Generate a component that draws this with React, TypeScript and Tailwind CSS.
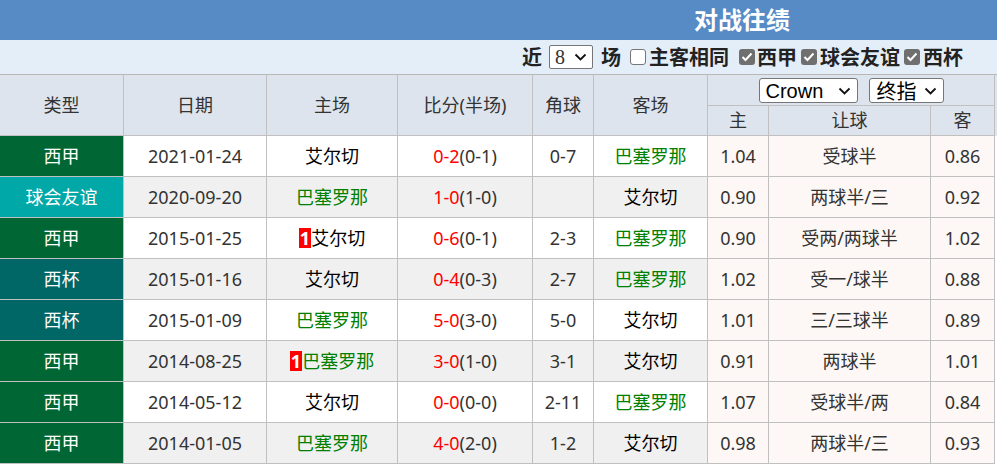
import React from 'react';

type Match = {
  type: string;
  date: string;
  home: string;
  homeBadge?: boolean;
  score: string;
  half: string;
  corner: string;
  away: string;
  h: string;
  line: string;
  a: string;
};

const matches: Match[] = [
  { type: '西甲', date: '2021-01-24', home: '艾尔切', score: '0-2', half: '(0-1)', corner: '0-7', away: '巴塞罗那', h: '1.04', line: '受球半', a: '0.86' },
  { type: '球会友谊', date: '2020-09-20', home: '巴塞罗那', score: '1-0', half: '(1-0)', corner: '', away: '艾尔切', h: '0.90', line: '两球半/三', a: '0.92' },
  { type: '西甲', date: '2015-01-25', home: '艾尔切', homeBadge: true, score: '0-6', half: '(0-1)', corner: '2-3', away: '巴塞罗那', h: '0.90', line: '受两/两球半', a: '1.02' },
  { type: '西杯', date: '2015-01-16', home: '艾尔切', score: '0-4', half: '(0-3)', corner: '2-7', away: '巴塞罗那', h: '1.02', line: '受一/球半', a: '0.88' },
  { type: '西杯', date: '2015-01-09', home: '巴塞罗那', score: '5-0', half: '(3-0)', corner: '5-0', away: '艾尔切', h: '1.01', line: '三/三球半', a: '0.89' },
  { type: '西甲', date: '2014-08-25', home: '巴塞罗那', homeBadge: true, score: '3-0', half: '(1-0)', corner: '3-1', away: '艾尔切', h: '0.91', line: '两球半', a: '1.01' },
  { type: '西甲', date: '2014-05-12', home: '艾尔切', score: '0-0', half: '(0-0)', corner: '2-11', away: '巴塞罗那', h: '1.07', line: '受球半/两', a: '0.84' },
  { type: '西甲', date: '2014-01-05', home: '巴塞罗那', score: '4-0', half: '(2-0)', corner: '1-2', away: '艾尔切', h: '0.98', line: '两球半/三', a: '0.93' },
];

const typeBg: Record<string, string> = {
  西甲: 'bg-[#006633]',
  西杯: 'bg-[#006666]',
  球会友谊: 'bg-[#00a8a8]',
};

const teamColor = (name: string) => (name === '巴塞罗那' ? 'text-[#008000]' : 'text-black');

const Chevron = () => (
  <svg width="13" height="8" viewBox="0 0 13 8" fill="none">
    <path d="M1.5 1.5 L6.5 6.5 L11.5 1.5" stroke="#111" strokeWidth="1.8" />
  </svg>
);

const CheckBox = ({ checked }: { checked: boolean }) =>
  checked ? (
    <span className="inline-flex h-[16px] w-[16px] items-center justify-center rounded-[3px] bg-[#6f6f6f]">
      <svg width="12" height="10" viewBox="0 0 12 10" fill="none">
        <path d="M1.5 5 L4.5 8 L10.5 1.5" stroke="#fff" strokeWidth="2" />
      </svg>
    </span>
  ) : (
    <span className="inline-block h-[16px] w-[16px] rounded-[3px] border border-[#767676] bg-white" />
  );

const cell = 'flex items-center justify-center border-r border-b border-[#c0c0c0]';
const cols = 'grid grid-cols-[124px_143px_131px_135px_61px_114px_61px_162px_64px]';

export default function App() {
  return (
    <div className="w-[997px] h-[466px] overflow-hidden bg-white font-['Noto_Sans','Noto_Sans_CJK_SC',sans-serif] text-[18px] text-[#333]">
      <div className="h-[40px] bg-[#568bc6] pl-[694px] flex items-center">
        <span className="text-[24px] font-bold text-white leading-none">对战往绩</span>
      </div>

      <div className="h-[35px] bg-[#e4eef9] border-b border-[#b8b8b8] flex items-center justify-end pr-[34px] text-[20px] font-bold text-[#222] font-['Noto_Sans_CJK_SC',sans-serif]">
        <span>近</span>
        <span className="ml-[7px] mr-[8px] flex h-[24px] w-[44px] items-center justify-between rounded-[2px] border border-[#767676] bg-white pl-[5px] pr-[5px] font-normal">
          <span className="font-['Liberation_Serif',serif] text-[20px] leading-none text-[#333]">8</span>
          <Chevron />
        </span>
        <span>场</span>
        <span className="ml-[9px] mr-[3px] flex"><CheckBox checked={false} /></span>
        <span>主客相同</span>
        <span className="ml-[10px] mr-[2px] flex"><CheckBox checked /></span>
        <span>西甲</span>
        <span className="ml-[4px] mr-[3px] flex"><CheckBox checked /></span>
        <span>球会友谊</span>
        <span className="ml-[4px] mr-[3px] flex"><CheckBox checked /></span>
        <span>西杯</span>
      </div>

      <div className={`${cols} grid-rows-[31px_30px] bg-[#dde4ed]`}>
        <div className={`${cell} row-span-2`}>类型</div>
        <div className={`${cell} row-span-2`}>日期</div>
        <div className={`${cell} row-span-2`}>主场</div>
        <div className={`${cell} row-span-2`}>比分(半场)</div>
        <div className={`${cell} row-span-2`}>角球</div>
        <div className={`${cell} row-span-2`}>客场</div>
        <div className={`${cell} col-span-3 gap-[11px] pt-[1px]`}>
          <span className="flex h-[25px] w-[99px] items-center justify-between rounded-[3px] border border-[#767676] bg-white pl-[6px] pr-[6px] font-['Liberation_Sans',sans-serif] text-[20px] text-black">
            <span className="leading-none">Crown</span>
            <Chevron />
          </span>
          <span className="flex h-[25px] w-[75px] items-center justify-between rounded-[3px] border border-[#767676] bg-white pl-[7px] pr-[6px] font-['Noto_Sans_CJK_SC',sans-serif] text-[20px] text-black">
            <span className="leading-none">终指</span>
            <Chevron />
          </span>
        </div>
        <div className={cell}>主</div>
        <div className={cell}>让球</div>
        <div className={cell}>客</div>
      </div>

      {matches.map((m, i) => {
        const rowBg = i % 2 === 1 ? 'bg-[#f0f0f0]' : 'bg-white';
        return (
          <div key={i} className={`${cols} h-[41px]`}>
            <div className={`${cell} ${typeBg[m.type]} text-white`}>{m.type}</div>
            <div className={`${cell} ${rowBg}`}>{m.date}</div>
            <div className={`${cell} ${rowBg}`}>
              {m.homeBadge && (
                <span className="bg-[#ff0000] px-[1px] text-[18px] font-bold leading-[20px] text-white">1</span>
              )}
              <span className={teamColor(m.home)}>{m.home}</span>
            </div>
            <div className={`${cell} ${rowBg}`}>
              <span className="text-[#ff0000]">{m.score}</span>
              <span>{m.half}</span>
            </div>
            <div className={`${cell} ${rowBg}`}>{m.corner}</div>
            <div className={`${cell} ${rowBg}`}>
              <span className={teamColor(m.away)}>{m.away}</span>
            </div>
            <div className={`${cell} bg-[#fdf8f5]`}>{m.h}</div>
            <div className={`${cell} bg-[#fdf8f5]`}>{m.line}</div>
            <div className={`${cell} bg-[#fdf8f5]`}>{m.a}</div>
          </div>
        );
      })}
    </div>
  );
}
